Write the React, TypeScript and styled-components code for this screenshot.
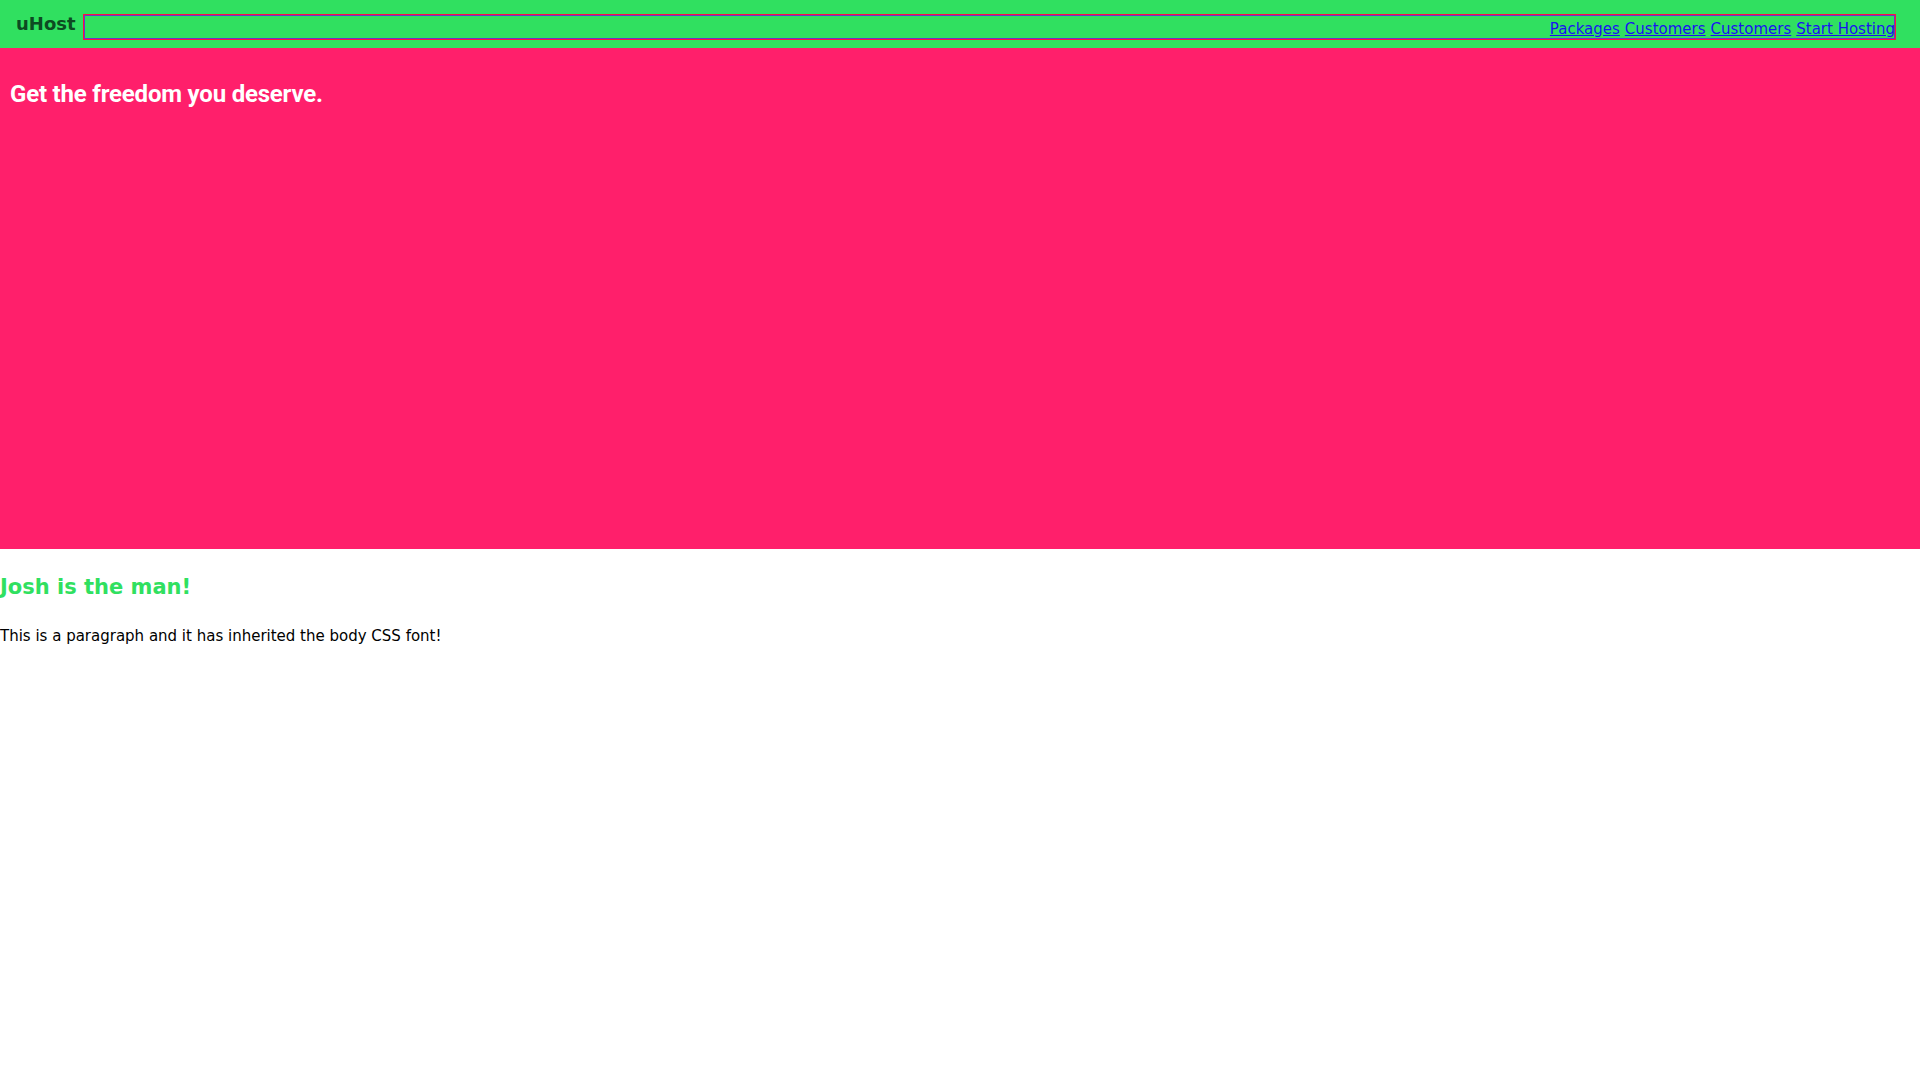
import React from "react";
import styled, { createGlobalStyle } from "styled-components";

const GlobalStyle = createGlobalStyle`
  html, body {
    margin: 0;
    padding: 0;
    background: #ffffff;
  }
  body {
    font-family: "Comic Sans MS", "DejaVu Sans", sans-serif;
  }
`;

const Header = styled.header`
  display: flex;
  align-items: center;
  gap: 7px;
  height: 48px;
  padding: 0 24px 0 16px;
  box-sizing: border-box;
  background: #30e060;
`;

const Logo = styled.a`
  font-family: "Comic Sans MS", "DejaVu Sans", sans-serif;
  font-size: 18px;
  font-weight: bold;
  color: #0d4a22;
  text-decoration: none;
  margin-top: -1px;
`;

const Nav = styled.nav`
  flex: 1;
  display: flex;
  justify-content: flex-end;
  align-items: center;
  gap: 5px;
  height: 26px;
  margin-top: 6px;
  padding-top: 3px;
  box-sizing: border-box;
  border: 1px solid #ff1040;
  box-shadow: inset 0 0 0 1px #6a36c8;
`;

const NavLink = styled.a`
  font-family: "Comic Sans MS", "DejaVu Sans", sans-serif;
  font-size: 15px;
  color: #1a12f0;
  text-decoration: underline;
`;

const Hero = styled.section`
  height: 501px;
  background: #ff1f6b;
  padding: 32px 10px 0;
  box-sizing: border-box;
`;

const HeroTitle = styled.h1`
  margin: 0;
  font-family: Roboto, "Liberation Sans", sans-serif;
  font-weight: bold;
  font-size: 24px;
  color: #ffffff;
  letter-spacing: -0.2px;
`;

const Content = styled.main`
  padding-top: 26px;
`;

const Title = styled.h2`
  margin: 0 0 28px;
  font-size: 21px;
  font-weight: bold;
  color: #30e060;
`;

const Paragraph = styled.p`
  margin: 0;
  font-size: 15px;
  color: #000000;
`;

const links = ["Packages", "Customers", "Customers", "Start Hosting"];

export default function App() {
  return (
    <>
      <GlobalStyle />
      <Header>
        <Logo href="#">uHost</Logo>
        <Nav>
          {links.map((l, i) => (
            <NavLink key={i} href="#">
              {l}
            </NavLink>
          ))}
        </Nav>
      </Header>
      <Hero>
        <HeroTitle>Get the freedom you deserve.</HeroTitle>
      </Hero>
      <Content>
        <Title>Josh is the man!</Title>
        <Paragraph>This is a paragraph and it has inherited the body CSS font!</Paragraph>
      </Content>
    </>
  );
}
